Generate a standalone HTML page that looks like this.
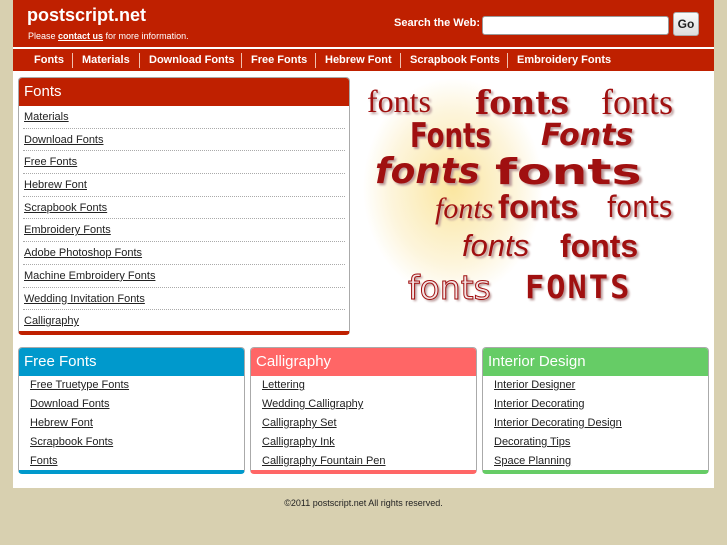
<!DOCTYPE html>
<html><head><meta charset="utf-8"><style>
*{margin:0;padding:0;box-sizing:border-box}
body{width:727px;height:545px;background:#d8d0b0;font-family:"Liberation Sans",sans-serif;position:relative;overflow:hidden}
#wrap{position:absolute;left:13px;top:0;width:701px;height:488px;background:#fff}
#hdr{position:absolute;left:0;top:0;width:701px;height:47px;background:#bf2000;color:#fff}
#logo{position:absolute;left:14px;top:5px;font-size:18px;font-weight:bold}
#sub{position:absolute;left:15px;top:31px;font-size:9px}
#sub a{color:#fff;font-weight:bold}
#srch{position:absolute;left:381px;top:17px;font-size:11px;font-weight:bold}
#inp{position:absolute;left:469px;top:16px;width:187px;height:19px;background:#fff;border:1px solid #999;border-radius:3px}
#go{position:absolute;left:660px;top:12px;width:26px;height:24px;background:linear-gradient(#fafafa,#ddd);border:1px solid #aaa;border-radius:3px;color:#222;font-size:12px;font-weight:bold;text-align:center;line-height:22px}
#nav{position:absolute;left:0;top:49px;width:701px;height:22px;background:#bf2000;color:#fff;font-size:11px;font-weight:bold;white-space:nowrap}
#nav span{position:absolute;top:5px}
#nav i{position:absolute;top:4px;width:1px;height:15px;background:#f0c0b0}
a{color:#222;text-decoration:underline}
.box{position:absolute;background:#fff;border:1px solid #aaa;border-radius:4px;overflow:hidden}
.box h2{color:#fff;font-size:15px;font-weight:normal;padding-left:5px;height:28px;line-height:27px}
#fonts{left:5px;top:77px;width:332px;height:258px;border-bottom:4px solid #bf2000}
#fonts h2{background:#bf2000}
#fonts ul{list-style:none;padding:0 4px}
#fonts li{height:22.7px;line-height:22px;font-size:11px;padding-left:1px;border-bottom:1px dotted #aaa}
#fonts li:last-child{border:none}
.sm{top:347px;height:127px}
.sm ul{list-style:none;padding:0 0 0 11px}
.sm li{height:19px;line-height:18px;font-size:11px}
#ff{left:5px;width:227px;border-bottom:4px solid #0099cc}#ff h2{background:#0099cc}
#ca{left:237px;width:227px;border-bottom:4px solid #ff6666}#ca h2{background:#ff6666}
#id{left:469px;width:227px;border-bottom:4px solid #66cc66}#id h2{background:#66cc66}
#img{position:absolute;left:350px;top:78px;width:330px;height:237px;background:radial-gradient(ellipse 90px 110px at 90px 110px,#fbe6a0,#fdf5dc 70%,#fff 100%);overflow:hidden}
#img span{position:absolute;color:#a01010;text-shadow:2px 2px 2px #b99;white-space:nowrap;line-height:1}
#foot{position:absolute;top:498px;left:0;width:727px;text-align:center;font-size:9px;color:#222}
</style></head><body>
<div id="wrap">
<div id="hdr">
<div id="logo">postscript.net</div>
<div id="sub">Please <a href="#">contact us</a> for more information.</div>
<div id="srch">Search the Web:</div>
<div id="inp"></div>
<div id="go">Go</div>
</div>
<div id="nav">
<span style="left:21px">Fonts</span><i style="left:59px"></i>
<span style="left:69px">Materials</span><i style="left:126px"></i>
<span style="left:136px">Download Fonts</span><i style="left:228px"></i>
<span style="left:238px">Free Fonts</span><i style="left:302px"></i>
<span style="left:312px">Hebrew Font</span><i style="left:387px"></i>
<span style="left:397px">Scrapbook Fonts</span><i style="left:494px"></i>
<span style="left:504px">Embroidery Fonts</span>
</div>
<div class="box" id="fonts"><h2>Fonts</h2><ul>
<li><a href="#">Materials</a></li><li><a href="#">Download Fonts</a></li><li><a href="#">Free Fonts</a></li><li><a href="#">Hebrew Font</a></li><li><a href="#">Scrapbook Fonts</a></li><li><a href="#">Embroidery Fonts</a></li><li><a href="#">Adobe Photoshop Fonts</a></li><li><a href="#">Machine Embroidery Fonts</a></li><li><a href="#">Wedding Invitation Fonts</a></li><li><a href="#">Calligraphy</a></li></ul></div>
<div id="img">
<span style="left:4px;top:5px;font:32px 'Liberation Serif',serif">fonts</span>
<span style="left:112px;top:5px;font:bold 33px 'DejaVu Serif',serif">fonts</span>
<span style="left:238px;top:3px;font:36px 'Liberation Serif',serif">fonts</span>
<span style="left:47px;top:38px;font:bold 34px 'DejaVu Sans Condensed',sans-serif;transform:scaleX(0.85);transform-origin:left">Fonts</span>
<span style="left:178px;top:40px;font:italic bold 30px 'DejaVu Sans',sans-serif">Fonts</span>
<span style="left:12px;top:73px;font:italic bold 36px 'DejaVu Sans',sans-serif">fonts</span>
<span style="left:132px;top:74px;font:bold 36px 'DejaVu Sans',sans-serif;transform:scaleX(1.4);transform-origin:left">fonts</span>
<span style="left:72px;top:114px;font:italic 30px 'Liberation Serif',serif">fonts</span>
<span style="left:135px;top:110px;font:bold 33px 'Liberation Sans',sans-serif">fonts</span>
<span style="left:244px;top:112px;font:29px 'DejaVu Sans Condensed',sans-serif">fonts</span>
<span style="left:99px;top:150px;font:italic 31px 'Liberation Sans',sans-serif">fonts</span>
<span style="left:197px;top:150px;font:bold 32px 'Liberation Sans',sans-serif">fonts</span>
<span style="left:45px;top:190px;font:33px 'DejaVu Sans',sans-serif;color:#f4e4e4;-webkit-text-stroke:1px #a01010">fonts</span>
<span style="left:162px;top:190px;font:bold 32px 'DejaVu Sans Mono',monospace;letter-spacing:2px">FONTS</span>
</div>
<div class="box sm" id="ff"><h2>Free Fonts</h2><ul><li><a href="#">Free Truetype Fonts</a></li><li><a href="#">Download Fonts</a></li><li><a href="#">Hebrew Font</a></li><li><a href="#">Scrapbook Fonts</a></li><li><a href="#">Fonts</a></li></ul></div>
<div class="box sm" id="ca"><h2>Calligraphy</h2><ul><li><a href="#">Lettering</a></li><li><a href="#">Wedding Calligraphy</a></li><li><a href="#">Calligraphy Set</a></li><li><a href="#">Calligraphy Ink</a></li><li><a href="#">Calligraphy Fountain Pen</a></li></ul></div>
<div class="box sm" id="id"><h2>Interior Design</h2><ul><li><a href="#">Interior Designer</a></li><li><a href="#">Interior Decorating</a></li><li><a href="#">Interior Decorating Design</a></li><li><a href="#">Decorating Tips</a></li><li><a href="#">Space Planning</a></li></ul></div>
</div>
<div id="foot">©2011 postscript.net All rights reserved.</div>
</body></html>
